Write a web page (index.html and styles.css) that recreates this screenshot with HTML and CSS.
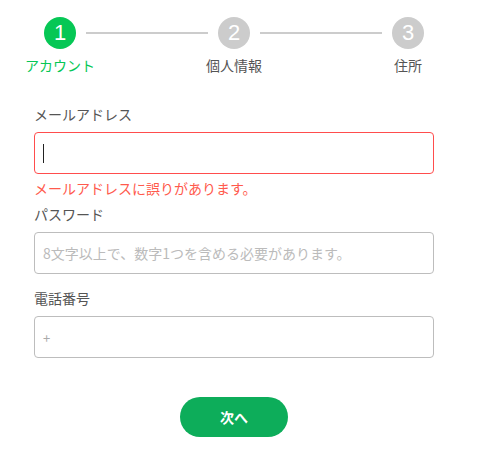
FILE: index.html
```html
<!DOCTYPE html>
<html lang="ja">
<head>
<meta charset="utf-8">
<link rel="stylesheet" href="styles.css">
</head>
<body>
<div class="stepper">
  <div class="step active">
    <div class="circle">1</div>
    <div class="step-label">アカウント</div>
  </div>
  <div class="line"></div>
  <div class="step">
    <div class="circle">2</div>
    <div class="step-label">個人情報</div>
  </div>
  <div class="line"></div>
  <div class="step">
    <div class="circle">3</div>
    <div class="step-label">住所</div>
  </div>
</div>

<form class="form">
  <div class="field field-error">
    <label class="label">メールアドレス</label>
    <div class="input input-invalid"><span class="caret"></span></div>
    <div class="error">メールアドレスに誤りがあります。</div>
  </div>
  <div class="field">
    <label class="label">パスワード</label>
    <input class="input" type="password" placeholder="8文字以上で、数字1つを含める必要があります。">
  </div>
  <div class="field">
    <label class="label">電話番号</label>
    <input class="input input-phone" type="tel" placeholder="+">
  </div>
  <div class="actions">
    <button type="button" class="btn">次へ</button>
  </div>
</form>
</body>
</html>
```
FILE: styles.css
```css
* { box-sizing: border-box; }
body {
  margin: 0;
  background: #fff;
  font-family: "Noto Sans CJK JP", "Noto Sans", sans-serif;
  font-size: 14px;
  color: #555;
}
.stepper {
  display: flex;
  align-items: flex-start;
  width: 380px;
  margin-left: 44px;
  padding-top: 17px;
}
.step {
  width: 32px;
  display: flex;
  flex-direction: column;
  align-items: center;
}
.circle {
  width: 32px;
  height: 32px;
  border-radius: 50%;
  background: #cccccc;
  color: #fff;
  font-family: "Liberation Sans", Arial, sans-serif;
  font-size: 22px;
  line-height: 32px;
  text-align: center;
}
.step.active .circle { background: #06c755; }
.step-label {
  margin-top: 6px;
  white-space: nowrap;
  font-size: 14px;
  line-height: 20px;
  color: #555;
}
.step.active .step-label { color: #06c755; }
.line {
  flex: 1;
  height: 2px;
  margin: 15px 10px 0;
  background: #cccccc;
}
.form {
  width: 400px;
  margin: 29px 0 0 34px;
}
.field { margin-bottom: 14px; }
.field-error { margin-bottom: 6px; }
.label {
  display: block;
  font-size: 14px;
  line-height: 20px;
  color: #555;
  margin-bottom: 8px;
}
.input {
  display: block;
  width: 100%;
  height: 42px;
  border: 1px solid #bdbdbd;
  border-radius: 4px;
  padding: 0 8px;
  font-family: inherit;
  font-size: 14px;
  color: #333;
  background: #fff;
  outline: none;
}
.input::placeholder { color: #bbbbbb; }
.input-phone::placeholder { color: #aaaaaa; font-size: 13px; }
.input-invalid {
  border-color: #ff4d4d;
  display: flex;
  align-items: center;
}
.caret {
  width: 1px;
  height: 19px;
  background: #222;
}
.error {
  margin-top: 4px;
  font-size: 14px;
  line-height: 20px;
  color: #ff5a4d;
}
.actions {
  display: flex;
  justify-content: center;
  padding-top: 25px;
}
.btn {
  width: 108px;
  height: 40px;
  border: none;
  border-radius: 20px;
  background: #0dad5a;
  color: #fff;
  font-family: inherit;
  font-size: 14px;
  font-weight: bold;
  cursor: pointer;
}
```
